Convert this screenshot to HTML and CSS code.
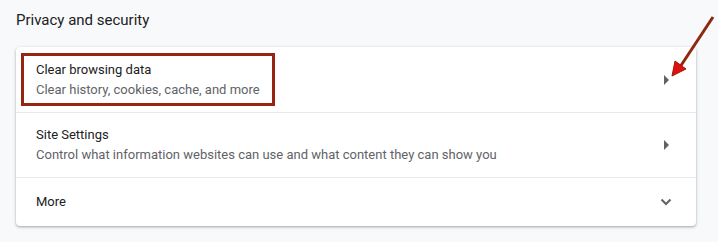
FILE: index.html
```html
<!DOCTYPE html>
<html lang="en">
<head>
    <meta charset="UTF-8">
    <meta name="viewport" content="width=device-width, initial-scale=1.0">
    <title>Privacy and security</title>
    <link rel="stylesheet" href="styles.css">
</head>
<body>
    <div class="page">
        <div class="section-title">Privacy and security</div>
        <div class="card">
            <div class="row row-first">
                <div class="row-text">
                    <div class="row-label">Clear browsing data</div>
                    <div class="row-sub">Clear history, cookies, cache, and more</div>
                </div>
                <div class="row-icon">
                    <svg width="10" height="10" viewBox="0 0 10 10"><path d="M3 0 L8 5 L3 10 Z" fill="#5f6368"/></svg>
                </div>
                <div class="highlight"></div>
            </div>
            <div class="row">
                <div class="row-text">
                    <div class="row-label">Site Settings</div>
                    <div class="row-sub">Control what information websites can use and what content they can show you</div>
                </div>
                <div class="row-icon">
                    <svg width="10" height="10" viewBox="0 0 10 10"><path d="M3 0 L8 5 L3 10 Z" fill="#5f6368"/></svg>
                </div>
            </div>
            <div class="row row-more">
                <div class="row-text">
                    <div class="row-label">More</div>
                </div>
                <div class="row-icon">
                    <svg width="12" height="8" viewBox="0 0 12 8"><path d="M1.5 1.5 L6 6 L10.5 1.5" fill="none" stroke="#5f6368" stroke-width="2"/></svg>
                </div>
            </div>
        </div>
        <svg class="pointer" width="60" height="80" viewBox="0 0 60 80">
            <line x1="53" y1="7" x2="20" y2="57" stroke="#8b2a10" stroke-width="3"/>
            <path d="M12 66 L15 51 L26 59 Z" fill="#e01010" stroke="#a01808" stroke-width="1"/>
        </svg>
    </div>
</body>
</html>
```

FILE: styles.css
```css
body {
    margin: 0;
    background-color: #f8f9fa;
    font-family: Roboto, "Liberation Sans", Arial, sans-serif;
    color: #202124;
}
.page {
    position: relative;
    padding: 10px 22px 16px 16px;
}
.section-title {
    font-size: 15px;
    line-height: 20px;
    margin-bottom: 17px;
}
.card {
    position: relative;
    background-color: #fff;
    border-radius: 4px;
    box-shadow: 0 1px 2px rgba(60, 64, 67, 0.3), 0 1px 3px 1px rgba(60, 64, 67, 0.12);
}
.row {
    position: relative;
    display: flex;
    align-items: center;
    padding: 12px 20px 12px 20px;
    border-top: 1px solid #e8eaed;
    min-height: 40px;
}
.row-first {
    border-top: none;
    padding-top: 13px;
}
.row-more {
    min-height: 24px;
}
.row-text {
    flex: 1;
}
.row-label {
    font-size: 13px;
    line-height: 20px;
}
.row-sub {
    font-size: 13px;
    line-height: 20px;
    color: #5f6368;
}
.row-icon {
    width: 20px;
    display: flex;
    justify-content: center;
    align-items: center;
}
.highlight {
    position: absolute;
    left: 5px;
    top: 6px;
    width: 248px;
    height: 47px;
    border: 3px solid #972511;
}
.pointer {
    position: absolute;
    left: 660px;
    top: 10px;
}
```
